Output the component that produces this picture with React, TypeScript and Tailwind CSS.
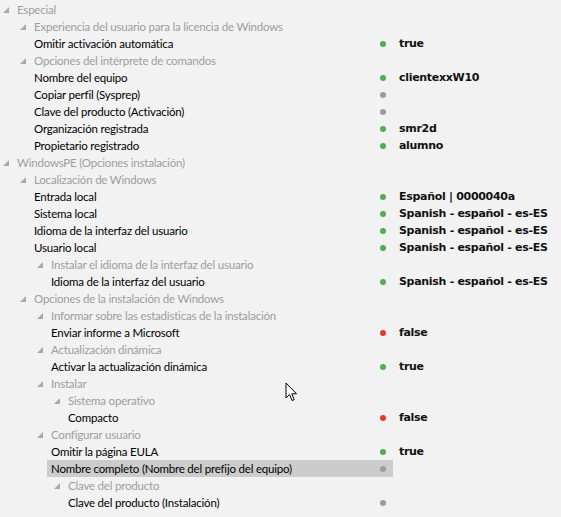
type Dot = "green" | "gray" | "red";

type Row = {
  label: string;
  depth: number;
  group?: boolean;
  dot?: Dot;
  value?: string;
  selected?: boolean;
};

const ES = "Spanish - español - es-ES";

const rows: Row[] = [
  { label: "Especial", depth: 0, group: true },
  { label: "Experiencia del usuario para la licencia de Windows", depth: 1, group: true },
  { label: "Omitir activación automática", depth: 2, dot: "green", value: "true" },
  { label: "Opciones del intérprete de comandos", depth: 1, group: true },
  { label: "Nombre del equipo", depth: 2, dot: "green", value: "clientexxW10" },
  { label: "Copiar perfil (Sysprep)", depth: 2, dot: "gray" },
  { label: "Clave del producto (Activación)", depth: 2, dot: "gray" },
  { label: "Organización registrada", depth: 2, dot: "green", value: "smr2d" },
  { label: "Propietario registrado", depth: 2, dot: "green", value: "alumno" },
  { label: "WindowsPE (Opciones instalación)", depth: 0, group: true },
  { label: "Localización de Windows", depth: 1, group: true },
  { label: "Entrada local", depth: 2, dot: "green", value: "Español | 0000040a" },
  { label: "Sistema local", depth: 2, dot: "green", value: ES },
  { label: "Idioma de la interfaz del usuario", depth: 2, dot: "green", value: ES },
  { label: "Usuario local", depth: 2, dot: "green", value: ES },
  { label: "Instalar el idioma de la interfaz del usuario", depth: 2, group: true },
  { label: "Idioma de la interfaz del usuario", depth: 3, dot: "green", value: ES },
  { label: "Opciones de la instalación de Windows", depth: 1, group: true },
  { label: "Informar sobre las estadísticas de la instalación", depth: 2, group: true },
  { label: "Enviar informe a Microsoft", depth: 3, dot: "red", value: "false" },
  { label: "Actualización dinámica", depth: 2, group: true },
  { label: "Activar la actualización dinámica", depth: 3, dot: "green", value: "true" },
  { label: "Instalar", depth: 2, group: true },
  { label: "Sistema operativo", depth: 3, group: true },
  { label: "Compacto", depth: 4, dot: "red", value: "false" },
  { label: "Configurar usuario", depth: 2, group: true },
  { label: "Omitir la página EULA", depth: 3, dot: "green", value: "true" },
  { label: "Nombre completo (Nombre del prefijo del equipo)", depth: 3, dot: "gray", selected: true },
  { label: "Clave del producto", depth: 3, group: true },
  { label: "Clave del producto (Instalación)", depth: 4, dot: "gray" },
];

// group rows start at 17*depth, leaf rows 4px before their text
const spacer: Record<number, string> = {
  0: "w-0",
  17: "w-[17px]",
  30: "w-[30px]",
  34: "w-[34px]",
  47: "w-[47px]",
  51: "w-[51px]",
  64: "w-[64px]",
};

const dotColor: Record<Dot, string> = {
  green: "bg-[#4fae4f]",
  gray: "bg-[#9c9c9c]",
  red: "bg-[#e23b2e]",
};

function Expander() {
  return (
    <span className="flex h-[17px] w-[17px] shrink-0 items-center">
      <svg width="6" height="6" viewBox="0 0 6 6" className="ml-[3px] mt-[1px]" aria-hidden="true">
        <polygon points="6,0 6,6 0,6" fill="#a8a8a8" />
      </svg>
    </span>
  );
}

function TreeRow({ row }: { row: Row }) {
  const offset = row.group ? row.depth * 17 : row.depth * 17 - 4;
  return (
    <div className="flex h-[17px] items-center">
      <div className="flex h-[17px] w-[393px] shrink-0">
        <div className={`${spacer[offset]} shrink-0`} />
        <div
          className={`flex flex-1 items-center pr-[7px] ${row.selected ? "bg-[#cccccc]" : ""} ${
            row.group ? "" : "pl-[4px]"
          }`}
        >
          {row.group && <Expander />}
          <span
            className={`flex-1 whitespace-nowrap ${row.group ? "text-[#9d9d9d]" : "text-[#000000]"}`}
          >
            {row.label}
          </span>
          {row.dot && <span className={`h-[6px] w-[6px] rounded-full ${dotColor[row.dot]}`} />}
        </div>
      </div>
      {row.value && (
        <span className="ml-[6px] whitespace-nowrap font-['DejaVu_Sans',sans-serif] text-[11px] font-bold tracking-[-0.3px] text-[#111111]">
          {row.value}
        </span>
      )}
    </div>
  );
}

export default function App() {
  return (
    <div className="relative h-[517px] w-[561px] overflow-hidden bg-[#f2f2f2] pt-[1px] font-['Lato',sans-serif] text-[11.5px] leading-[17px] tracking-[-0.2px]">
      {rows.map((r, i) => (
        <TreeRow key={i} row={r} />
      ))}
      {/* mouse pointer */}
      <svg
        width="14"
        height="21"
        viewBox="0 0 14 21"
        className="absolute left-[285px] top-[382px]"
        aria-hidden="true"
      >
        <path
          d="M1 1 L1 16 L4.5 12.5 L7 18.5 L9.2 17.6 L6.8 11.8 L11.5 11.8 Z"
          fill="#ffffff"
          stroke="#000000"
          strokeWidth="1"
          strokeLinejoin="miter"
        />
      </svg>
    </div>
  );
}
